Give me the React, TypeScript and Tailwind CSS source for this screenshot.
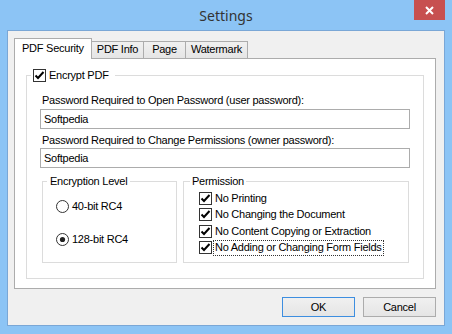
import React from 'react';

function CheckBox({ checked = true }: { checked?: boolean }) {
  return (
    <span className="w-[13px] h-[13px] shrink-0 border border-[#333333] bg-white flex items-center justify-center">
      {checked && (
        <svg width="11" height="11" viewBox="0 0 11 11">
          <polyline points="1.5,5.5 4,8 9.5,2" fill="none" stroke="#000" strokeWidth="2" />
        </svg>
      )}
    </span>
  );
}

function Radio({ checked }: { checked?: boolean }) {
  return (
    <svg width="13" height="13" viewBox="0 0 13 13" className="shrink-0">
      <circle cx="6.5" cy="6.5" r="6" fill="#fff" stroke="#333" strokeWidth="1" />
      {checked && <circle cx="6.5" cy="6.5" r="2.6" fill="#222" />}
    </svg>
  );
}

export default function App() {
  const perms = [
    { label: 'No Printing', mt: 'mt-[10px]' },
    { label: 'No Changing the Document', mt: 'mt-[3px]' },
    { label: 'No Content Copying or Extraction', mt: 'mt-[4px]' },
    { label: 'No Adding or Changing Form Fields', mt: 'mt-[3px]', focus: true },
  ];

  return (
    <div className="w-[452px] h-[334px] bg-[#8cc4f5] flex flex-col font-['Liberation_Sans',Arial,sans-serif] text-[11px] leading-[13px] text-black tracking-[-0.25px] overflow-hidden">
      {/* Title bar */}
      <div className="relative h-[30px] shrink-0 flex items-center justify-center">
        <span className="font-['Noto_Sans',sans-serif] text-[14px] tracking-normal text-[#333333]">Settings</span>
        <div className="absolute left-[414px] top-0 w-[31px] h-[20px] bg-[#c75050] flex items-center justify-center">
          <svg width="9" height="9" viewBox="0 0 9 9">
            <path d="M1 1L8 8M8 1L1 8" stroke="#fff" strokeWidth="2" />
          </svg>
        </div>
      </div>

      {/* Client area */}
      <div className="mx-[7px] h-[296px] border border-[#7aa7d6] bg-[#f0f0f0] flex flex-col pt-[7px] pl-[6px] pr-[8px]">
        {/* Tabs */}
        <div className="h-[20px] flex items-end">
          <div className="relative z-10 -mb-px h-[21px] w-[78px] bg-white border-l border-t border-r border-[#acacac] pl-[7px] pt-[3px]">
            PDF Security
          </div>
          <div className="h-[17px] w-[52px] bg-linear-to-b from-[#f0f0f0] to-[#e5e5e5] border-t border-r border-[#acacac] flex justify-center pt-[1px]">
            PDF Info
          </div>
          <div className="h-[17px] w-[42px] bg-linear-to-b from-[#f0f0f0] to-[#e5e5e5] border-t border-r border-[#acacac] flex justify-center pt-[1px]">
            Page
          </div>
          <div className="h-[17px] w-[62px] bg-linear-to-b from-[#f0f0f0] to-[#e5e5e5] border-t border-r border-[#acacac] flex justify-center pt-[1px]">
            Watermark
          </div>
        </div>

        {/* Tab panel */}
        <div className="h-[231px] bg-white border border-[#acacac] pt-[16px] px-[11px]">
          <div className="relative h-[204px] border border-[#dcdcdc] px-[13px] pt-[18px]">
            <div className="absolute left-[4px] -top-[7px] bg-white pl-[2px] pr-[6px] h-[13px] flex items-center gap-[3px]">
              <CheckBox />
              <span>Encrypt PDF</span>
            </div>

            <div className="pl-[2px] h-[13px]">Password Required to Open Password (user password):</div>
            <div className="mt-[2px] h-[20px] border border-[#acacac] bg-white pl-[3px] flex items-center">Softpedia</div>
            <div className="mt-[5px] pl-[2px] h-[13px]">Password Required to Change Permissions (owner password):</div>
            <div className="mt-[1px] h-[20px] border border-[#acacac] bg-white pl-[3px] flex items-center">Softpedia</div>

            <div className="mt-[13px] ml-[2px] flex gap-[6px]">
              <div className="relative w-[135px] h-[82px] border border-[#dcdcdc] pl-[13px]">
                <div className="absolute left-[4px] -top-[7px] bg-white px-[3px] h-[13px]">Encryption Level</div>
                <div className="mt-[18px] h-[13px] flex items-center gap-[3px]">
                  <Radio />
                  <span>40-bit RC4</span>
                </div>
                <div className="mt-[20px] h-[13px] flex items-center gap-[3px]">
                  <Radio checked />
                  <span>128-bit RC4</span>
                </div>
              </div>

              <div className="relative w-[226px] h-[82px] border border-[#dcdcdc] pl-[15px]">
                <div className="absolute left-[6px] -top-[7px] bg-white px-[2px] h-[13px]">Permission</div>
                {perms.map((p) => (
                  <div key={p.label} className={`${p.mt} h-[13px] flex items-center gap-[1px]`}>
                    <CheckBox />
                    <span
                      className={`h-[16px] pl-[1px] pr-[1px] flex items-center border ${
                        p.focus ? 'border-dotted border-[#333333]' : 'border-transparent'
                      }`}
                    >
                      {p.label}
                    </span>
                  </div>
                ))}
              </div>
            </div>
          </div>
        </div>

        {/* Buttons */}
        <div className="mt-[8px] flex justify-end gap-[8px]">
          <button className="w-[73px] h-[20px] border border-[#3d8ee0] bg-linear-to-b from-[#f0f0f0] to-[#e5e5e5] flex items-center justify-center">
            OK
          </button>
          <button className="w-[73px] h-[20px] border border-[#acacac] bg-linear-to-b from-[#f0f0f0] to-[#e5e5e5] flex items-center justify-center">
            Cancel
          </button>
        </div>
      </div>
    </div>
  );
}
